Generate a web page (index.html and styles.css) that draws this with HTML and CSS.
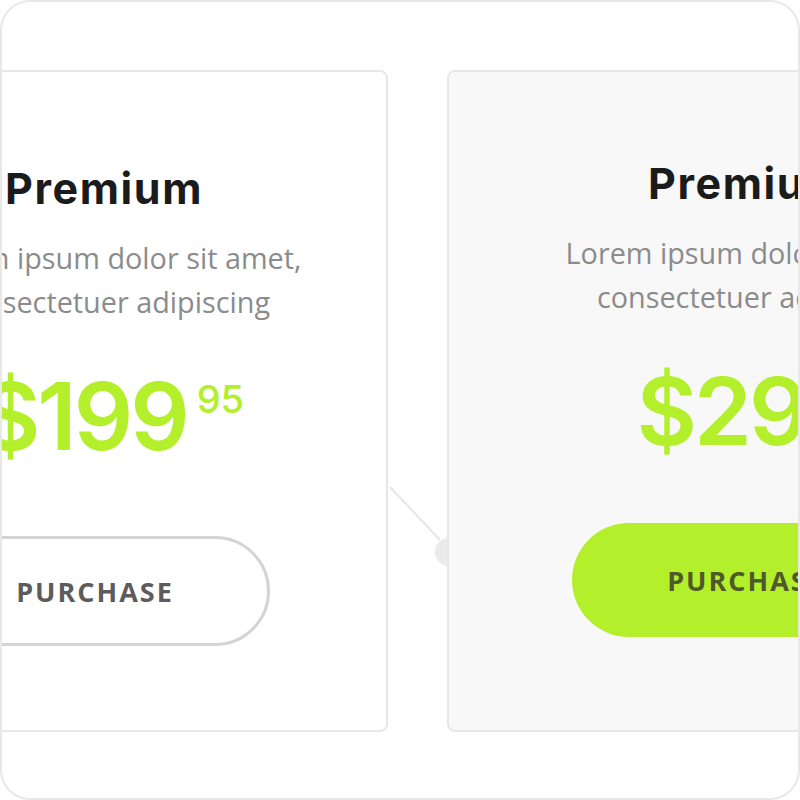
FILE: index.html
```html
<!DOCTYPE html>
<html lang="en">
<head>
<meta charset="utf-8">
<title>Pricing</title>
<link rel="stylesheet" href="styles.css">
</head>
<body>
<div class="frame">
  <svg class="deco" width="80" height="100" viewBox="0 0 80 100" aria-hidden="true">
    <line x1="2" y1="7" x2="52" y2="60" stroke="#e6e6e6" stroke-width="2"/>
    <circle cx="61" cy="72" r="14" fill="#ebebeb"/>
  </svg>
  <div class="track">
    <div class="card">
      <h2 class="title">Premium</h2>
      <p class="desc">Lorem ipsum dolor sit amet,<br>consectetuer adipiscing</p>
      <div class="price"><span class="amount">$199</span><span class="cents">95</span></div>
      <a class="btn btn-outline">PURCHASE</a>
    </div>
    <div class="card featured">
      <h2 class="title">Premium</h2>
      <p class="desc">Lorem ipsum dolor sit amet,<br>consectetuer adipiscing</p>
      <div class="price price-alt"><span class="amount">$299</span><span class="cents">95</span></div>
      <a class="btn btn-fill">PURCHASE</a>
    </div>
  </div>
</div>
</body>
</html>
```
FILE: styles.css
```css
html, body {
  margin: 0;
  padding: 0;
  background: #ffffff;
}

.frame {
  position: relative;
  width: 800px;
  height: 800px;
  box-sizing: border-box;
  border: 2px solid #e8e8e8;
  border-radius: 30px;
  overflow: hidden;
  background: #ffffff;
}

.deco {
  position: absolute;
  left: 386px;
  top: 478px;
}

.track {
  position: relative;
  display: flex;
  gap: 59px;
  padding-top: 68px;
  margin-left: -198px;
}

.card {
  flex-shrink: 0;
  box-sizing: border-box;
  width: 584px;
  height: 662px;
  border: 2px solid #e7e7e7;
  border-radius: 8px;
  background: #ffffff;
  padding: 91px 0 0 32px;
  display: flex;
  flex-direction: column;
  align-items: center;
}

.featured {
  background: #f8f8f8;
  padding-top: 86px;
}

.title {
  margin: 0 16px 0 0;
  font-family: Inter, "Liberation Sans", sans-serif;
  font-weight: 700;
  font-size: 43px;
  line-height: 50px;
  letter-spacing: 1.6px;
  color: #1b1b1b;
}

.desc {
  margin: 23px 0 0 0;
  font-family: "Open Sans", "Liberation Sans", sans-serif;
  font-weight: 400;
  font-size: 28.8px;
  line-height: 44px;
  color: #8b8b8b;
  text-align: center;
}

.price {
  margin-top: 46px;
  display: flex;
  align-items: flex-start;
  color: #b4ef2b;
  font-family: Inter, "Liberation Sans", sans-serif;
}

.price-alt {
  margin-left: 46px;
}

.amount {
  font-weight: 600;
  font-size: 93px;
  line-height: 93px;
  letter-spacing: -3px;
}

.cents {
  font-weight: 500;
  font-size: 38px;
  line-height: 38px;
  margin: 10px 0 0 10px;
}

.btn {
  box-sizing: border-box;
  width: 349px;
  border-radius: 57px;
  display: flex;
  align-items: center;
  justify-content: center;
  font-family: "Open Sans", "Liberation Sans", sans-serif;
  font-weight: 700;
  font-size: 27px;
  letter-spacing: 2px;
}

.btn-outline {
  margin: 73px 34px 0 0;
  height: 110px;
  border: 3px solid #d4d4d4;
  color: #5c5c5c;
}

.btn-fill {
  margin: 65px 18px 0 0;
  height: 114px;
  background: #b4ef2b;
  color: #4e5a2a;
}
```
